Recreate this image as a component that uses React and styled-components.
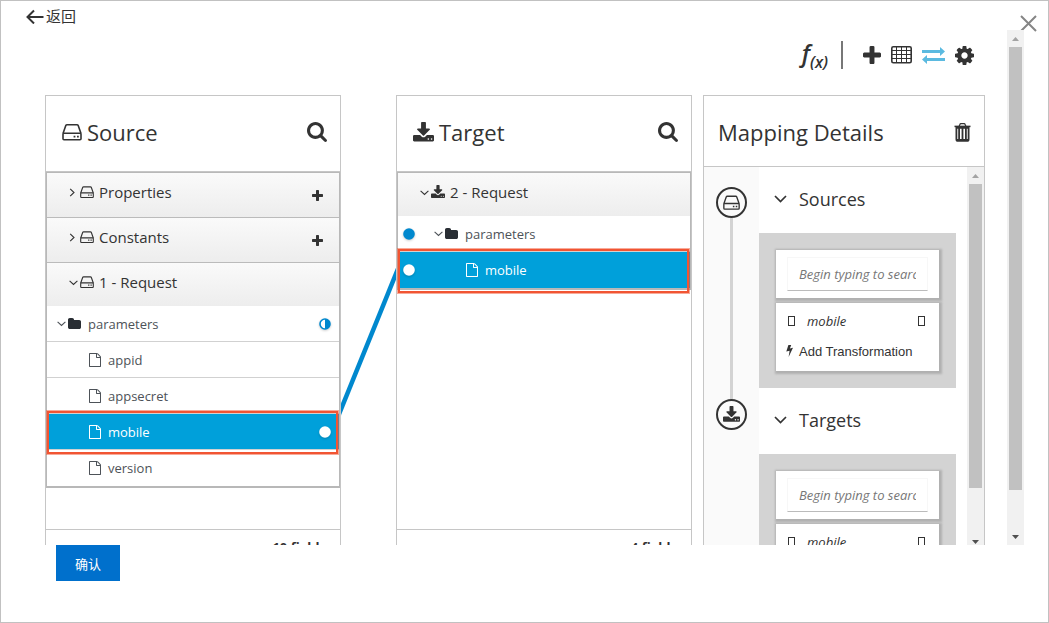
import React from 'react'
import styled, { createGlobalStyle } from 'styled-components'

const sourceGroups = [
  { name: 'Properties' },
  { name: 'Constants' },
  {
    name: '1 - Request',
    open: true,
    fields: [
      { name: 'parameters', folder: true, port: 'half' },
      { name: 'appid' },
      { name: 'appsecret' },
      { name: 'mobile', selected: true, port: 'light' },
      { name: 'version' },
    ],
  },
]

const targetFields = [
  { name: 'parameters', folder: true, port: 'full' },
  { name: 'mobile', selected: true, port: 'light' },
]

export default function App() {
  return (
    <Frame>
      <GlobalStyle />
      <TopBar>
        <BackLink href="#back">
          <ArrowLeftIcon />
          返回
        </BackLink>
        <CloseButton type="button" aria-label="Close">
          <CloseIcon />
        </CloseButton>
      </TopBar>
      <Viewport>
        <Editor>
          <Toolbar>
            <FxButton type="button">
              f<sub>(x)</sub>
            </FxButton>
            <Divider />
            <Tools>
              <IconButton type="button" aria-label="Add"><PlusIcon size={18} /></IconButton>
              <IconButton type="button" aria-label="Table"><TableIcon /></IconButton>
              <IconButton type="button" aria-label="Lines" $active><ExchangeIcon /></IconButton>
              <IconButton type="button" aria-label="Settings"><CogIcon /></IconButton>
            </Tools>
          </Toolbar>
          <Columns>
            <Panel>
              <PanelHeader>
                <PanelTitle><DriveIcon size={20} />Source</PanelTitle>
                <IconButton type="button" aria-label="Search source"><SearchIcon /></IconButton>
              </PanelHeader>
              <PanelBody>
                <Tree>
                  {sourceGroups.map((group) => (
                    <React.Fragment key={group.name}>
                      <GroupHeader $open={group.open}>
                        <GroupLabel>
                          <Chevron open={group.open} />
                          <DriveIcon size={14} />
                          <GroupName>{group.name}</GroupName>
                        </GroupLabel>
                        {!group.open && (
                          <IconButton type="button" aria-label={`Add to ${group.name}`}>
                            <PlusIcon size={11} />
                          </IconButton>
                        )}
                      </GroupHeader>
                      {group.fields && group.fields.map((field) => (
                        <Field key={field.name} $selected={field.selected}>
                          <FieldLabel $indent={field.folder ? 5 : 37}>
                            <FieldIcon folder={field.folder} />
                            {field.name}
                          </FieldLabel>
                          {field.port && <Port type={field.port} />}
                        </Field>
                      ))}
                    </React.Fragment>
                  ))}
                </Tree>
              </PanelBody>
              <PanelFooter>10 fields</PanelFooter>
            </Panel>

            <Connector viewBox="0 0 55 165" preserveAspectRatio="none" aria-hidden="true">
              <path d="M-6 168 L61 3" stroke="#0088ce" strokeWidth="4.5" fill="none" />
            </Connector>

            <Panel>
              <PanelHeader>
                <PanelTitle><DownloadIcon size={21} />Target</PanelTitle>
                <IconButton type="button" aria-label="Search target"><SearchIcon /></IconButton>
              </PanelHeader>
              <PanelBody>
                <Tree>
                  <GroupHeader $open>
                    <GroupLabel>
                      <Chevron open />
                      <DownloadIcon size={14} />
                      <GroupName>2 - Request</GroupName>
                    </GroupLabel>
                  </GroupHeader>
                  {targetFields.map((field) => (
                    <Field key={field.name} $selected={field.selected}>
                      <Port type={field.port} />
                      <FieldLabel $indent={field.folder ? 19 : 51}>
                        <FieldIcon folder={field.folder} />
                        {field.name}
                      </FieldLabel>
                    </Field>
                  ))}
                </Tree>
              </PanelBody>
              <PanelFooter>4 fields</PanelFooter>
            </Panel>

            <DetailsPanel>
              <DetailsHeader>
                <PanelTitle>Mapping Details</PanelTitle>
                <IconButton type="button" aria-label="Delete mapping"><TrashIcon /></IconButton>
              </DetailsHeader>
              <DetailsBody>
                <Rail>
                  <RailCircle><DriveIcon size={17} /></RailCircle>
                  <RailLine />
                  <RailCircle><DownloadIcon size={17} /></RailCircle>
                </Rail>
                <Sections>
                  <MappingSection title="Sources" />
                  <MappingSection title="Targets" />
                </Sections>
                <Scrollbar thumb="87%" />
              </DetailsBody>
            </DetailsPanel>
          </Columns>
        </Editor>
        <Scrollbar thumb="92%" />
      </Viewport>
      <BottomBar>
        <ConfirmButton type="button">确认</ConfirmButton>
      </BottomBar>
    </Frame>
  )
}

function MappingSection({ title }) {
  return (
    <section>
      <SectionTitle>
        <svg width="13" height="8" viewBox="0 0 13 8" fill="none" stroke="currentColor" strokeWidth="1.7">
          <path d="M1 1 L6.5 6.5 L12 1" />
        </svg>
        {title}
      </SectionTitle>
      <Cards>
        <SearchCard>
          <SearchInput type="text" placeholder="Begin typing to search" aria-label={`Search ${title}`} />
        </SearchCard>
        <MappingCard>
          <CardRow>
            <Glyph />
            <CardName>mobile</CardName>
            <Glyph $end />
          </CardRow>
          <TransformButton type="button">
            <BoltIcon />
            Add Transformation
          </TransformButton>
        </MappingCard>
      </Cards>
    </section>
  )
}

function Scrollbar({ thumb }) {
  return (
    <ScrollTrack aria-hidden="true">
      <ScrollArrow>
        <svg width="7" height="4" viewBox="0 0 7 4"><path d="M0 4 L3.5 0 L7 4z" fill="#a3a3a3" /></svg>
      </ScrollArrow>
      <ScrollArea>
        <ScrollThumb style={{ height: thumb }} />
      </ScrollArea>
      <ScrollArrow>
        <svg width="7" height="4" viewBox="0 0 7 4"><path d="M0 0 L3.5 4 L7 0z" fill="#505050" /></svg>
      </ScrollArrow>
    </ScrollTrack>
  )
}

function FieldIcon({ folder }) {
  if (folder) {
    return (
      <FolderIcons>
        <Chevron open />
        <svg width="13" height="11" viewBox="64 128 1664 1408" fill="#292e34">
          <path d="M1728 608v704q0 92-66 158t-158 66h-1216q-92 0-158-66t-66-158v-960q0-92 66-158t158-66h320q92 0 158 66t66 158v32h672q92 0 158 66t66 158z" />
        </svg>
      </FolderIcons>
    )
  }
  return (
    <svg width="12" height="14" viewBox="128 0 1536 1792" fill="currentColor">
      <path d="M1596 380q28 28 48 76t20 88v1152q0 40-28 68t-68 28h-1344q-40 0-68-28t-28-68v-1600q0-40 28-68t68-28h896q40 0 88 20t76 48zm-444-244v376h376q-10-29-22-41l-313-313q-12-12-41-22zm384 1528v-1024h-416q-40 0-68-28t-28-68v-416h-768v1536h1280z" />
    </svg>
  )
}

function Port({ type }) {
  const color = type === 'light' ? '#fff' : '#0088ce'
  return (
    <PortIcon width="12" height="12" viewBox="0 0 12 12">
      {type === 'half' ? (
        <>
          <circle cx="6" cy="6" r="5" fill="#fff" stroke={color} strokeWidth="1.6" />
          <path d="M6 1 a5 5 0 0 1 0 10z" fill={color} />
        </>
      ) : (
        <circle cx="6" cy="6" r="5.8" fill={color} />
      )}
    </PortIcon>
  )
}

function Chevron({ open }) {
  return (
    <svg width="9" height="9" viewBox="0 0 9 9" fill="none" stroke="currentColor" strokeWidth="1.1">
      <path d={open ? 'M0.6 2.8 L4.5 6.5 L8.4 2.8' : 'M1.2 0.8 L5 4.5 L1.2 8.2'} />
    </svg>
  )
}

function DriveIcon({ size }) {
  return (
    <svg width={size} height={size} viewBox="0 0 20 20" fill="none" stroke="currentColor" strokeWidth="1.6">
      <path d="M1 11.5 L3.8 3.6 Q4.1 2.7 5.1 2.7 H14.9 Q15.9 2.7 16.2 3.6 L19 11.5" />
      <path d="M2 11.2 H18 Q19 11.2 19 12.2 V16.8 Q19 17.8 18 17.8 H2 Q1 17.8 1 16.8 V12.2 Q1 11.2 2 11.2z" />
      <path d="M11.6 14.6 h1.8 M15 14.6 h1.8" strokeWidth="1.8" />
    </svg>
  )
}

function DownloadIcon({ size }) {
  return (
    <svg width={size} height={size} viewBox="64 0 1664 1664" fill="currentColor">
      <path d="M1344 1344q0-26-19-45t-45-19-45 19-19 45 19 45 45 19 45-19 19-45zm256 0q0-26-19-45t-45-19-45 19-19 45 19 45 45 19 45-19 19-45zm128-224v320q0 40-28 68t-68 28h-1472q-40 0-68-28t-28-68v-320q0-40 28-68t68-28h465l135 136q58 56 136 56t136-56l136-136h464q40 0 68 28t28 68zm-325-569q17 41-14 70l-448 448q-18 19-45 19t-45-19l-448-448q-31-29-14-70 17-39 59-39h256v-448q0-26 19-45t45-19h256q26 0 45 19t19 45v448h256q42 0 59 39z" />
    </svg>
  )
}

function SearchIcon() {
  return (
    <svg width="20" height="20" viewBox="64 128 1664 1664" fill="currentColor">
      <path d="M1216 832q0-185-131.5-316.5t-316.5-131.5-316.5 131.5-131.5 316.5 131.5 316.5 316.5 131.5 316.5-131.5 131.5-316.5zm512 832q0 52-38 90t-90 38q-54 0-90-38l-343-342q-179 124-399 124-143 0-273.5-55.5t-225-150-150-225-55.5-273.5 55.5-273.5 150-225 225-150 273.5-55.5 273.5 55.5 225 150 150 225 55.5 273.5q0 220-124 399l343 343q37 37 37 90z" />
    </svg>
  )
}

function PlusIcon({ size }) {
  return (
    <svg width={size} height={size} viewBox="192 128 1408 1408" fill="currentColor">
      <path d="M1600 736v192q0 40-28 68t-68 28h-416v416q0 40-28 68t-68 28h-192q-40 0-68-28t-28-68v-416h-416q-40 0-68-28t-28-68v-192q0-40 28-68t68-28h416v-416q0-40 28-68t68-28h192q40 0 68 28t28 68v416h416q40 0 68 28t28 68z" />
    </svg>
  )
}

function TableIcon() {
  return (
    <svg width="21" height="18" viewBox="0 0 21 18" fill="none" stroke="currentColor">
      <rect x="0.8" y="0.8" width="19.4" height="16" rx="1.5" strokeWidth="1.6" />
      <path d="M1 4.5 H20 M1 8.5 H20 M1 12.5 H20 M5.5 1 V17 M10.5 1 V17 M15.5 1 V17" strokeWidth="1" />
    </svg>
  )
}

function ExchangeIcon() {
  return (
    <svg width="23" height="17" viewBox="0 0 23 17" fill="currentColor">
      <path d="M0 3 H18 V0 L23 4.5 L18 9 V6 H0z" />
      <path d="M23 11 H5 V8 L0 12.5 L5 17 V14 H23z" />
    </svg>
  )
}

function CogIcon() {
  return (
    <svg width="19" height="19" viewBox="0 128 1536 1536" fill="currentColor">
      <path d="M1024 896q0-106-75-181t-181-75-181 75-75 181 75 181 181 75 181-75 75-181zm512-109v222q0 12-8 23t-20 13l-185 28q-19 54-39 91 35 50 107 138 10 12 10 25t-9 23q-27 37-99 108t-94 71q-12 0-26-9l-138-108q-44 23-91 38-16 136-29 186-7 28-36 28h-222q-14 0-24.5-8.5t-11.5-21.5l-28-184q-49-16-90-37l-141 107q-10 9-25 9-14 0-25-11-126-114-165-168-7-10-7-23 0-12 8-23 15-21 51-66.5t54-70.5q-27-50-41-99l-183-27q-13-2-21-12.5t-8-23.5v-222q0-12 8-23t19-13l186-28q14-46 39-92-40-57-107-138-10-12-10-24 0-10 9-23 26-36 98.5-107.5t94.5-71.5q13 0 26 10l138 107q44-23 91-38 16-136 29-186 7-28 36-28h222q14 0 24.5 8.5t11.5 21.5l28 184q49 16 90 37l142-107q9-9 24-9 13 0 25 10 129 119 165 170 7 8 7 22 0 12-8 23-15 21-51 66.5t-54 70.5q26 50 41 98l183 28q13 2 21 12.5t8 23.5z" />
    </svg>
  )
}

function TrashIcon() {
  return (
    <svg width="17" height="19" viewBox="0 0 17 19" fill="none" stroke="currentColor">
      <path d="M5.2 3 L6 1.2 Q6.2 0.7 6.8 0.7 H10.2 Q10.8 0.7 11 1.2 L11.8 3" strokeWidth="1.3" />
      <path d="M0.5 3.4 H16.5" strokeWidth="1.5" />
      <path d="M2.4 3.4 V16.2 Q2.4 17.9 4 17.9 H13 Q14.6 17.9 14.6 16.2 V3.4" strokeWidth="1.8" />
      <path d="M2.4 4.8 H14.6 M2.6 17 H14.4" strokeWidth="1.8" />
      <path d="M5.1 5 V17 M8.5 5 V17 M11.9 5 V17" strokeWidth="1.8" />
    </svg>
  )
}

function BoltIcon() {
  return (
    <svg width="7" height="12" viewBox="0 0 7 12" fill="currentColor">
      <path d="M2.4 0 H5.2 L3.9 3.5 L7 2.8 L2.6 12 L3.6 5.8 L0.3 6.6z" />
    </svg>
  )
}

function ArrowLeftIcon() {
  return (
    <svg width="18" height="15" viewBox="0 0 18 15" fill="none" stroke="currentColor" strokeWidth="2">
      <path d="M1.5 8 H17.5 M8 1.5 L1.5 8 L8 14.5" />
    </svg>
  )
}

function CloseIcon() {
  return (
    <svg width="17" height="17" viewBox="0 0 17 17" fill="none" stroke="currentColor" strokeWidth="2">
      <path d="M1 1 L16 16 M16 1 L1 16" />
    </svg>
  )
}

const GlobalStyle = createGlobalStyle`
  *{
    box-sizing: border-box;
  }
  body{
    margin: 0;
    background-color: #fff;
    color: #333;
    font-family: "Open Sans", "Noto Sans CJK SC", sans-serif;
    font-size: 13px;
  }
  svg{
    display: block;
    flex: none;
  }
  button{
    font-family: inherit;
    color: inherit;
    border: 0;
    padding: 0;
    background: none;
    cursor: pointer;
  }
`

const Frame = styled.div`
  height: 100vh;
  display: flex;
  flex-direction: column;
  border: 1px solid #c1c1c1;
`

const TopBar = styled.header`
  height: 29px;
  flex: none;
  display: flex;
  justify-content: space-between;
  align-items: flex-start;
  padding: 0 11px 0 25px;
`

const BackLink = styled.a`
  display: flex;
  align-items: center;
  gap: 2px;
  padding-top: 5px;
  color: #333;
  font-size: 15px;
  line-height: 20px;
  text-decoration: none;
`

const CloseButton = styled.button`
  padding-top: 14px;
  color: #858585;
`

const Viewport = styled.main`
  flex: 1;
  min-height: 0;
  display: flex;
  margin-right: 24px;
  overflow: hidden;
`

const Editor = styled.div`
  flex: 1;
  min-width: 0;
  padding: 0 22px 0 44px;
`

const Toolbar = styled.div`
  height: 50px;
  margin-bottom: 15px;
  padding-right: 11px;
  display: flex;
  justify-content: flex-end;
  align-items: center;
`

const FxButton = styled.button`
  font-size: 24px;
  line-height: 24px;
  font-weight: 600;
  font-style: italic;
  sub{
    font-size: 16px;
    line-height: 16px;
  }
`

const Divider = styled.div`
  width: 2px;
  height: 28px;
  margin: 0 20px 0 13px;
  background-color: #777;
`

const Tools = styled.div`
  display: flex;
  align-items: center;
  gap: 10px;
`

const IconButton = styled.button`
  display: flex;
  color: ${(props) => (props.$active ? '#5bbae0' : '#333')};
`

const Columns = styled.div`
  display: grid;
  grid-template-columns: minmax(0, 296fr) 55px minmax(0, 296fr) 11px minmax(0, 282fr);
`

const Panel = styled.section`
  display: flex;
  flex-direction: column;
  border: 1px solid #c6c6c6;
`

const PanelHeader = styled.div`
  height: 76px;
  flex: none;
  display: flex;
  align-items: center;
  justify-content: space-between;
  padding: 0 13px 3px 16px;
  border-bottom: 1px solid #c6c6c6;
`

const PanelTitle = styled.h2`
  display: flex;
  align-items: center;
  gap: 5px;
  margin: 0;
  font-size: 22px;
  line-height: 30px;
  font-weight: 400;
`

const PanelBody = styled.div`
  flex: 1;
  min-height: 357px;
`

const Tree = styled.div`
  border: 1px solid #b8b8b8;
  border-bottom-width: 2px;
`

const GroupHeader = styled.div`
  height: ${(props) => (props.$open ? 43 : 45)}px;
  display: flex;
  align-items: center;
  justify-content: space-between;
  padding: 0 16px 0 22px;
  background: linear-gradient(#fafafa, #ededed);
  border-bottom: ${(props) => (props.$open ? '0' : '1px solid #bbb')};
`

const GroupLabel = styled.div`
  align-self: flex-start;
  display: flex;
  align-items: center;
  gap: 2px;
  padding-top: 9px;
`

const GroupName = styled.span`
  margin-left: 3px;
  font-size: 15px;
  line-height: 20px;
`

const Field = styled.div`
  position: relative;
  display: flex;
  align-items: center;
  height: 36px;
  padding: 0 8px 0 5px;
  color: ${(props) => (props.$selected ? '#fff' : '#4d5258')};
  background-color: ${(props) => (props.$selected ? '#00a0da' : '#fff')};
  border-bottom: 1px solid #d1d1d1;
  &:last-child{
    border-bottom: 0;
  }
  &::after{
    content: ${(props) => (props.$selected ? '""' : 'none')};
    position: absolute;
    z-index: 1;
    top: -3px;
    right: 1px;
    bottom: -5px;
    left: 0;
    border: 2px solid #f15533;
    box-shadow: 0 0 0 1px rgba(241, 85, 51, 0.5);
  }
`

const FieldLabel = styled.div`
  display: flex;
  align-items: center;
  gap: 7px;
  padding-left: ${(props) => props.$indent}px;
  margin-right: auto;
  line-height: 20px;
`

const FolderIcons = styled.span`
  display: flex;
  align-items: center;
  gap: 2px;
`

const PortIcon = styled.svg`
  filter: drop-shadow(0 1px 1px rgba(0, 0, 0, 0.2));
`

const PanelFooter = styled.div`
  padding: 7px 14px;
  border-top: 1px solid #c6c6c6;
  font-weight: 700;
  line-height: 20px;
  text-align: right;
`

const Connector = styled.svg`
  width: 100%;
  height: 165px;
  margin-top: 161px;
`

const DetailsPanel = styled.section`
  grid-column: 5;
  border: 1px solid #c6c6c6;
`

const DetailsHeader = styled(PanelHeader)`
  height: 71px;
  padding: 2px 13px 0 14px;
`

const DetailsBody = styled.div`
  display: flex;
  height: 383px;
  overflow: hidden;
`

const Rail = styled.div`
  width: 55px;
  flex: none;
  display: flex;
  flex-direction: column;
  align-items: center;
  padding-top: 20px;
  background-color: #fafafa;
`

const RailCircle = styled.div`
  width: 31px;
  height: 31px;
  flex: none;
  display: flex;
  align-items: center;
  justify-content: center;
  border: 2px solid #333;
  border-radius: 50%;
`

const RailLine = styled.div`
  width: 3px;
  height: 181px;
  flex: none;
  background-color: #d3d3d3;
`

const Sections = styled.div`
  flex: 1;
  min-width: 0;
  padding-right: 11px;
`

const SectionTitle = styled.h3`
  display: flex;
  align-items: center;
  gap: 12px;
  height: 66px;
  margin: 0;
  padding: 0 0 3px 15px;
  font-size: 18px;
  font-weight: 400;
`

const Cards = styled.div`
  display: flex;
  flex-direction: column;
  gap: 5px;
  padding: 17px;
  background-color: #d3d3d3;
`

const Card = styled.div`
  background-color: #fff;
  box-shadow: 1px 1px 2px 2px #b0b0b0;
`

const SearchCard = styled(Card)`
  padding: 7px 11px;
`

const SearchInput = styled.input`
  display: block;
  width: 100%;
  height: 34px;
  padding: 0 11px;
  border: 1px solid #f7f7f7;
  border-bottom-color: #bbb;
  outline: none;
  font-family: inherit;
  font-size: 13px;
  font-style: italic;
  &::placeholder{
    color: #777;
  }
`

const MappingCard = styled(Card)`
  padding: 3px 10px 5px;
`

const CardRow = styled.div`
  display: flex;
  align-items: center;
  height: 30px;
  padding: 0 4px 0 2px;
`

const Glyph = styled.span`
  width: 7px;
  height: 10px;
  margin-left: ${(props) => (props.$end ? 'auto' : '0')};
  border: 1px solid #333;
`

const CardName = styled.span`
  margin-left: 12px;
  font-style: italic;
`

const TransformButton = styled.button`
  display: flex;
  align-items: center;
  gap: 6px;
  height: 30px;
  font-family: "Liberation Sans", Arial, sans-serif;
  font-size: 13px;
  white-space: nowrap;
`

const ScrollTrack = styled.div`
  width: 17px;
  flex: none;
  display: flex;
  flex-direction: column;
  padding: 0 2px;
  background-color: #f1f1f1;
`

const ScrollArrow = styled.div`
  height: 17px;
  flex: none;
  display: flex;
  align-items: center;
  justify-content: center;
`

const ScrollArea = styled.div`
  flex: 1;
  min-height: 0;
`

const ScrollThumb = styled.div`
  background-color: #c1c1c1;
`

const BottomBar = styled.footer`
  height: 77px;
  flex: none;
  padding-left: 55px;
`

const ConfirmButton = styled.button`
  width: 64px;
  height: 36px;
  background-color: #0070cc;
  color: #fff;
  font-size: 13px;
`
